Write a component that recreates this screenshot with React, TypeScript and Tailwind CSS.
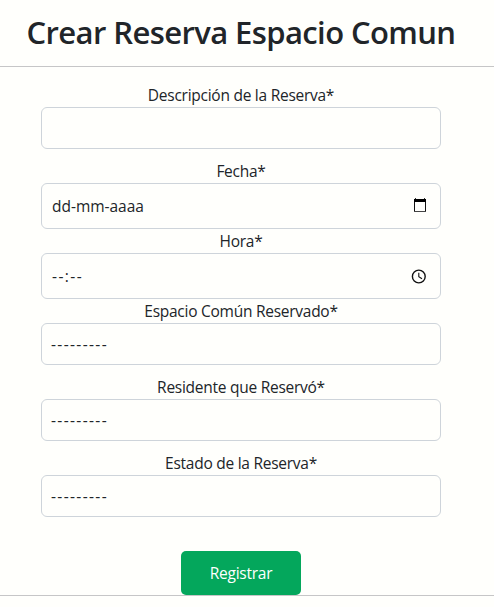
import type { ReactNode } from "react";

function CalendarIcon() {
  return (
    <svg width="14" height="16" viewBox="0 0 14 16" fill="none" shapeRendering="crispEdges">
      <path d="M2 0h1v1H2zM11 0h1v1h-1z" fill="#333" />
      <path d="M1 1h12v3H1z" fill="#000" />
      <path d="M1 4h1v9H1zM12 4h1v9h-1z" fill="#111" />
      <path d="M1 13h12v1H1z" fill="#444" />
    </svg>
  );
}

function ClockIcon() {
  return (
    <svg width="16" height="16" viewBox="0 0 16 16" fill="none" stroke="#111">
      <circle cx="7.8" cy="8.5" r="6.4" strokeWidth="1.4" />
      <path d="M7.8 4.8V8.6L11 10.7" strokeWidth="1.1" />
    </svg>
  );
}

type FieldProps = {
  label: string;
  boxClass: string;
  children?: ReactNode;
};

function Field({ label, boxClass, children }: FieldProps) {
  return (
    <div>
      <div className="flex h-6 justify-center leading-6">
        <span className="whitespace-nowrap">{label}</span>
      </div>
      <div
        className={`flex items-center justify-between rounded-md border border-[#ced4da] ${boxClass}`}
      >
        {children}
      </div>
    </div>
  );
}

const dashes = <span className="pt-0.5 tracking-[1.35px]">---------</span>;

export default function App() {
  return (
    <main className="h-[607px] w-[494px] overflow-hidden bg-[#fffffc] font-['Open_Sans','Noto_Sans',sans-serif] text-[15.5px] tracking-[-0.26px] text-[#212529]">
      <header className="flex h-[67px] justify-center border-b border-[#c6c6c7] pr-3 pt-3">
        <h1 className="whitespace-nowrap text-[31px] font-semibold leading-10 tracking-[-0.6px]">
          Crear Reserva Espacio Comun
        </h1>
      </header>
      <form className="flex h-[529px] flex-col border-b border-[#c6c6c7] pl-[41px] pr-[53px] pt-4">
        <Field label="Descripción de la Reserva*" boxClass="mb-2.5 h-[42px]" />
        <Field label="Fecha*" boxClass="h-[46px] pl-2.5 pr-[13px]">
          <span className="pt-0.5 tracking-[-0.02px]">dd-mm-aaaa</span>
          <CalendarIcon />
        </Field>
        <Field label="Hora*" boxClass="h-[46px] pl-2.5 pr-[13px]">
          <span className="pt-0.5 tracking-[1.4px]">--:--</span>
          <ClockIcon />
        </Field>
        <Field label="Espacio Común Reservado*" boxClass="mb-2.5 h-[42px] pl-[9px]">
          {dashes}
        </Field>
        <Field label="Residente que Reservó*" boxClass="mb-2.5 h-[42px] pl-[9px]">
          {dashes}
        </Field>
        <Field label="Estado de la Reserva*" boxClass="h-[42px] pl-[9px]">
          {dashes}
        </Field>
        <button
          type="button"
          className="mt-[34px] h-11 w-[120px] shrink-0 self-center rounded-[5px] bg-[#04a75c] pt-0.5 text-white"
        >
          Registrar
        </button>
      </form>
    </main>
  );
}
